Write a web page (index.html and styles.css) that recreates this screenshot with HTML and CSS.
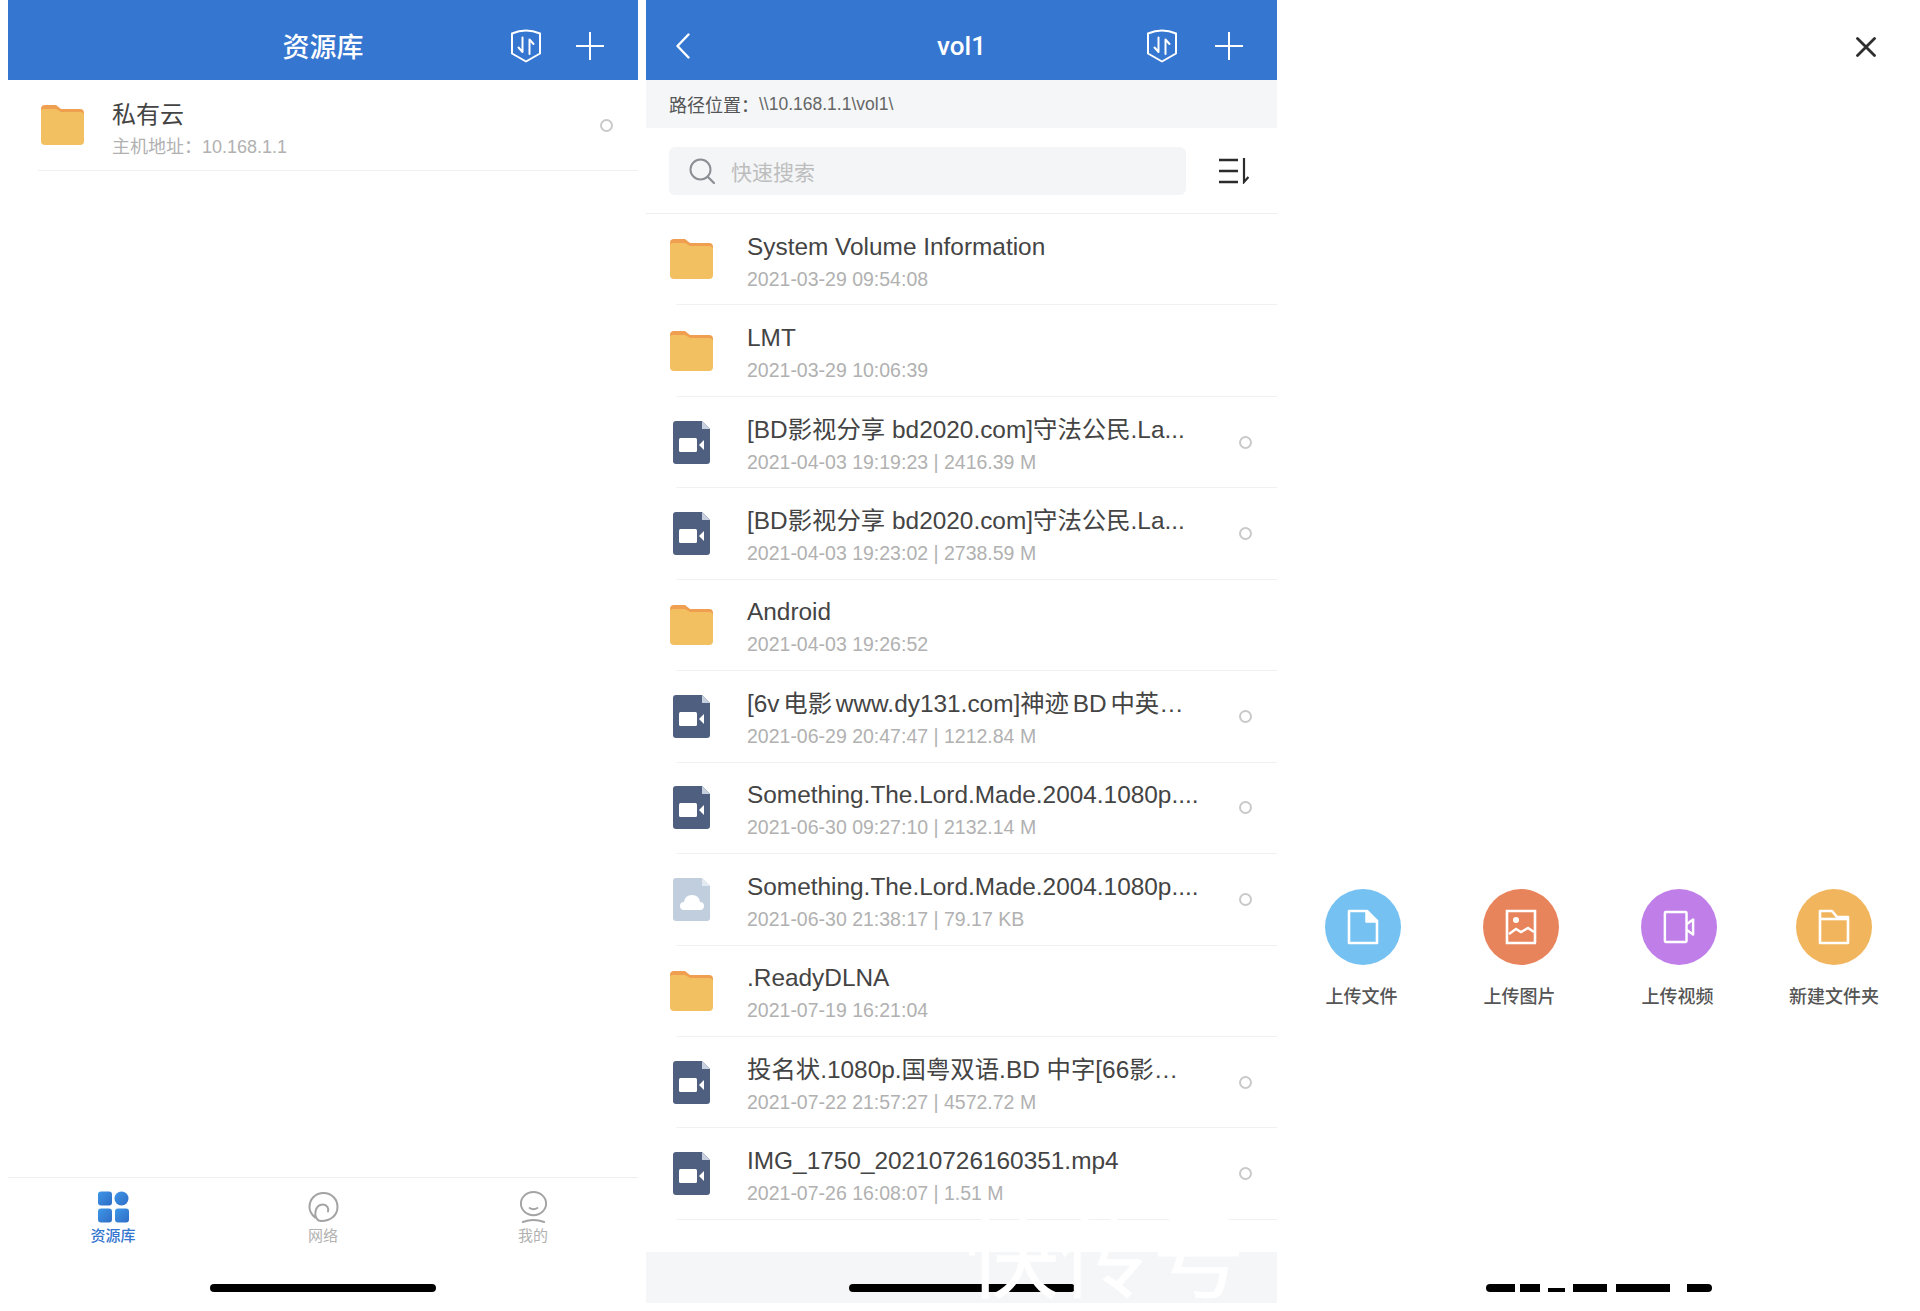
FILE: index.html
```html
<!DOCTYPE html>
<html lang="en">

<head>
  <meta charset="UTF-8">
  <title>资源库</title>
  <link rel="stylesheet" href="styles.css">
</head>

<body>
  <svg class="sprites" width="0" height="0">
    <symbol id="shield" viewBox="0 0 34 34">
      <path d="M3 4.500Q10 1.500 17 1.500T31 4.500V24.500L17 32.500 3 24.500Z" fill="none" stroke="#fff" stroke-width="2" stroke-linejoin="round" />
      <path d="M13.500 8.500V23L9.500 18.500M20.500 25V10.500L24.500 15" fill="none" stroke="#fff" stroke-width="2" stroke-linecap="round" stroke-linejoin="round" />
    </symbol>
    <symbol id="plus" viewBox="0 0 28 28">
      <path d="M14 0V28M0 14H28" stroke="#fff" stroke-width="2" />
    </symbol>
    <symbol id="folder" viewBox="0 0 43 40">
      <path d="M0 4Q0 0 4 0H15L20 4H39Q43 4 43 8V12H0Z" fill="#ef9f4f" />
      <path d="M0 6Q0 4 3 4H15L20 7H39Q43 7 43 11V36Q43 40 39 40H4Q0 40 0 36Z" fill="#f2c061" />
    </symbol>
    <symbol id="video" viewBox="0 0 37 43">
      <path d="M3 0H29L37 8V40Q37 43 34 43H3Q0 43 0 40V3Q0 0 3 0Z" fill="#4f5f80" />
      <path d="M29 0 37 8H29Z" fill="#c7d0de" />
      <rect x="6" y="17" width="18" height="14" rx="1.500" fill="#fff" />
      <path d="M26 24 31 19V29Z" fill="#fff" />
    </symbol>
    <symbol id="cloud" viewBox="0 0 37 43">
      <path d="M3 0H29L37 8V40Q37 43 34 43H3Q0 43 0 40V3Q0 0 3 0Z" fill="#c0cedd" />
      <path d="M29 0 37 8H29Z" fill="#e4eaf1" />
      <path d="M11 32Q7 32 7 28T11 24Q12 17 19 17T27 24Q31 24 31 28T27 32Z" fill="#fff" />
    </symbol>
  </svg>

  <section class="panel panel-home">
    <header class="topbar">
      <h1 class="topbar-title">资源库</h1>
      <svg class="icon-shield"><use href="#shield" /></svg>
      <svg class="icon-plus"><use href="#plus" /></svg>
    </header>
    <div class="row row-host">
      <svg class="row-icon row-folder"><use href="#folder" /></svg>
      <div class="row-text">
        <div class="row-name">私有云</div>
        <div class="row-meta">主机地址：10.168.1.1</div>
      </div>
      <span class="radio"></span>
    </div>
    <nav class="tabs">
      <div class="tab tab-active">
        <svg class="tab-icon" viewBox="0 0 31 31">
          <defs>
            <linearGradient id="tabBlue" x1="0" y1="0" x2="1" y2="1">
              <stop offset="0" stop-color="#3e97e8" />
              <stop offset="1" stop-color="#2f6cc6" />
            </linearGradient>
          </defs>
          <rect x="0" y="0" width="14" height="14" rx="3" fill="url(#tabBlue)" />
          <circle cx="23.500" cy="7" r="7" fill="url(#tabBlue)" />
          <rect x="0" y="17" width="14" height="14" rx="3" fill="url(#tabBlue)" />
          <rect x="17" y="17" width="14" height="14" rx="3" fill="url(#tabBlue)" />
        </svg>
        <span>资源库</span>
      </div>
      <div class="tab">
        <svg class="tab-icon" viewBox="0 0 31 31">
          <path d="M7 26C2.500 22 1.500 18 1.500 15.500 1.500 7.500 7.500 1.500 15.500 1.500S29.500 7.500 29.500 15.500 23 29.500 13 29.500C9 29.500 6.500 24.500 7.500 20 8.500 15 12 13 15 13 19 13 21 17 20 20" fill="none" stroke="#a3a3a3" stroke-width="2" stroke-linecap="round" />
        </svg>
        <span>网络</span>
      </div>
      <div class="tab">
        <svg class="tab-icon" viewBox="0 0 31 33">
          <ellipse cx="15.500" cy="13" rx="13" ry="12" fill="none" stroke="#a3a3a3" stroke-width="2" />
          <path d="M11.500 17.500Q15.500 20 19.500 17.500" fill="none" stroke="#a3a3a3" stroke-width="2" stroke-linecap="round" />
          <path d="M4.500 32Q15.500 28 26.500 32" fill="none" stroke="#a3a3a3" stroke-width="2" stroke-linecap="round" />
        </svg>
        <span>我的</span>
      </div>
    </nav>
    <div class="home-area"><span class="home-bar"></span></div>
  </section>

  <section class="panel panel-files">
    <header class="topbar">
      <svg class="icon-back" viewBox="0 0 14 26">
        <path d="M12.500 1.500 1.500 13 12.500 24.500" fill="none" stroke="#fff" stroke-width="2.400" stroke-linecap="round" stroke-linejoin="round" />
      </svg>
      <h1 class="topbar-title topbar-title-latin">vol1</h1>
      <svg class="icon-shield"><use href="#shield" /></svg>
      <svg class="icon-plus"><use href="#plus" /></svg>
    </header>
    <div class="path-bar">路径位置：<span class="path-value">\\10.168.1.1\vol1\</span></div>
    <div class="search-bar">
      <div class="search-box">
        <svg class="icon-search" viewBox="0 0 26 26">
          <circle cx="11.500" cy="11.500" r="10" fill="none" stroke="#8b8f94" stroke-width="2" />
          <path d="M19 19 25 25" stroke="#8b8f94" stroke-width="2.200" stroke-linecap="round" />
        </svg>
        <span class="search-hint">快速搜索</span>
      </div>
      <svg class="icon-sort" viewBox="0 0 30 26">
        <path d="M0 2H19M0 13H19M0 24H19" stroke="#2b2b2b" stroke-width="2.400" />
        <path d="M25 0V24L29.500 19" fill="none" stroke="#2b2b2b" stroke-width="2.200" />
      </svg>
    </div>
    <ul class="file-list">
      <li class="row">
        <svg class="row-icon row-folder"><use href="#folder" /></svg>
        <div class="row-text">
          <div class="row-name">System Volume Information</div>
          <div class="row-meta">2021-03-29 09:54:08</div>
        </div>
      </li>
      <li class="row">
        <svg class="row-icon row-folder"><use href="#folder" /></svg>
        <div class="row-text">
          <div class="row-name">LMT</div>
          <div class="row-meta">2021-03-29 10:06:39</div>
        </div>
      </li>
      <li class="row">
        <svg class="row-icon row-file"><use href="#video" /></svg>
        <div class="row-text">
          <div class="row-name">[BD影视分享 bd2020.com]守法公民.La...</div>
          <div class="row-meta">2021-04-03 19:19:23 | 2416.39 M</div>
        </div>
        <span class="radio"></span>
      </li>
      <li class="row">
        <svg class="row-icon row-file"><use href="#video" /></svg>
        <div class="row-text">
          <div class="row-name">[BD影视分享 bd2020.com]守法公民.La...</div>
          <div class="row-meta">2021-04-03 19:23:02 | 2738.59 M</div>
        </div>
        <span class="radio"></span>
      </li>
      <li class="row">
        <svg class="row-icon row-folder"><use href="#folder" /></svg>
        <div class="row-text">
          <div class="row-name">Android</div>
          <div class="row-meta">2021-04-03 19:26:52</div>
        </div>
      </li>
      <li class="row">
        <svg class="row-icon row-file"><use href="#video" /></svg>
        <div class="row-text">
          <div class="row-name row-name-tight">[6v 电影 www.dy131.com]神迹 BD 中英…</div>
          <div class="row-meta">2021-06-29 20:47:47 | 1212.84 M</div>
        </div>
        <span class="radio"></span>
      </li>
      <li class="row">
        <svg class="row-icon row-file"><use href="#video" /></svg>
        <div class="row-text">
          <div class="row-name">Something.The.Lord.Made.2004.1080p....</div>
          <div class="row-meta">2021-06-30 09:27:10 | 2132.14 M</div>
        </div>
        <span class="radio"></span>
      </li>
      <li class="row">
        <svg class="row-icon row-file"><use href="#cloud" /></svg>
        <div class="row-text">
          <div class="row-name">Something.The.Lord.Made.2004.1080p....</div>
          <div class="row-meta">2021-06-30 21:38:17 | 79.17 KB</div>
        </div>
        <span class="radio"></span>
      </li>
      <li class="row">
        <svg class="row-icon row-folder"><use href="#folder" /></svg>
        <div class="row-text">
          <div class="row-name">.ReadyDLNA</div>
          <div class="row-meta">2021-07-19 16:21:04</div>
        </div>
      </li>
      <li class="row">
        <svg class="row-icon row-file"><use href="#video" /></svg>
        <div class="row-text">
          <div class="row-name">投名状.1080p.国粤双语.BD 中字[66影…</div>
          <div class="row-meta">2021-07-22 21:57:27 | 4572.72 M</div>
        </div>
        <span class="radio"></span>
      </li>
      <li class="row">
        <svg class="row-icon row-file"><use href="#video" /></svg>
        <div class="row-text">
          <div class="row-name">IMG_1750_20210726160351.mp4</div>
          <div class="row-meta">2021-07-26 16:08:07 | 1.51 M</div>
        </div>
        <span class="radio"></span>
      </li>
    </ul>
    <div class="home-strip"><span class="home-bar"></span></div>
    <div class="watermark">快传号</div>
  </section>

  <section class="panel panel-actions">
    <div class="close-line">
      <svg class="icon-close" viewBox="0 0 20 20">
        <path d="M1.500 1.500 18.500 18.500M18.500 1.500 1.500 18.500" stroke="#2e2e2e" stroke-width="2.800" stroke-linecap="round" />
      </svg>
    </div>
    <div class="actions">
      <div class="action">
        <span class="action-circle action-blue">
          <svg viewBox="0 0 32 36">
            <path d="M2 2H20L30 12V34H2Z" fill="none" stroke="#fff" stroke-width="2.600" stroke-linejoin="round" />
            <path d="M19 2V13H30" fill="#fff" stroke="#fff" stroke-width="1.500" stroke-linejoin="round" />
          </svg>
        </span>
        <span class="action-label">上传文件</span>
      </div>
      <div class="action">
        <span class="action-circle action-orange">
          <svg viewBox="0 0 32 36">
            <path d="M31 34H2V2H30V34" fill="none" stroke="#fff" stroke-width="2.600" />
            <circle cx="11" cy="11" r="3" fill="#fff" />
            <path d="M4 25 11 20 16 23 23 19 29 23" fill="none" stroke="#fff" stroke-width="2.400" />
          </svg>
        </span>
        <span class="action-label">上传图片</span>
      </div>
      <div class="action">
        <span class="action-circle action-purple">
          <svg viewBox="0 0 34 36">
            <rect x="2" y="2" width="23" height="32" rx="1" fill="none" stroke="#fff" stroke-width="2.600" />
            <path d="M25 15 32 10V26L25 21" fill="none" stroke="#fff" stroke-width="2.600" stroke-linejoin="round" />
          </svg>
        </span>
        <span class="action-label">上传视频</span>
      </div>
      <div class="action">
        <span class="action-circle action-yellow">
          <svg viewBox="0 0 32 36">
            <path d="M2 8V2H14L19 8H30V34H2Z" fill="none" stroke="#fff" stroke-width="2.600" stroke-linejoin="round" />
            <path d="M2 10H30" stroke="#fff" stroke-width="2.600" />
          </svg>
        </span>
        <span class="action-label">新建文件夹</span>
      </div>
    </div>
    <span class="home-bar home-bar-cut"></span>
  </section>
</body>

</html>
```

FILE: styles.css
```css
/* Global Styles */
body {
  margin: 0;
  height: 1311px;
  overflow: hidden;
  background: #fff;
  display: flex;
  padding-left: 8px;
  font-family: "Liberation Sans", "Noto Sans CJK SC", sans-serif;
  color: #444;
}

.sprites {
  position: absolute;
}

.panel {
  position: relative;
  flex-shrink: 0;
  display: flex;
  flex-direction: column;
  height: 100%;
}

.panel-home {
  width: 630px;
  margin-right: 8px;
}

.panel-files {
  width: 631px;
}

.panel-actions {
  width: 643px;
}

/* Header */
.topbar {
  position: relative;
  height: 80px;
  flex-shrink: 0;
  box-sizing: border-box;
  padding-top: 11px;
  background: #3576d0;
  display: flex;
  align-items: center;
  justify-content: center;
}

.topbar-title {
  margin: 0;
  font-size: 27px;
  font-weight: 500;
  color: #fff;
}

.topbar-title-latin {
  font-family: Roboto, sans-serif;
  font-size: 26px;
}

.icon-shield {
  position: absolute;
  top: 29px;
  right: 95px;
  width: 34px;
  height: 34px;
}

.panel-files .icon-shield {
  right: 98px;
}

.icon-plus {
  position: absolute;
  top: 32px;
  right: 34px;
  width: 28px;
  height: 28px;
}

.icon-back {
  position: absolute;
  top: 33px;
  left: 30px;
  width: 14px;
  height: 26px;
}

/* Rows */
.row {
  height: 91.45px;
  box-sizing: border-box;
  display: flex;
  align-items: center;
  position: relative;
  padding-bottom: 1px;
}

.row::after {
  content: "";
  position: absolute;
  left: 30px;
  right: 0;
  bottom: 0;
  height: 1px;
  background: #f0f1f2;
}

.row-icon {
  flex-shrink: 0;
  display: block;
}

.row-folder {
  width: 43px;
  height: 40px;
  margin-left: 24px;
}

.row-file {
  width: 37px;
  height: 43px;
  margin-left: 27px;
  margin-right: 3px;
}

.row-text {
  flex: 1;
  margin-left: 34px;
  padding-top: 3px;
  min-width: 0;
}

.row-name {
  font-size: 24.400px;
  line-height: 32px;
  color: #444;
  white-space: nowrap;
}

.row-name-tight {
  word-spacing: -3px;
}

.row-meta {
  margin-top: 4px;
  font-size: 19.500px;
  line-height: 24px;
  color: #b1b1b1;
  white-space: nowrap;
}

.radio {
  width: 13px;
  height: 13px;
  box-sizing: border-box;
  flex-shrink: 0;
  margin-right: 25px;
  border: 2px solid #c9c9c9;
  border-radius: 50%;
}

.row-host .row-folder {
  margin-left: 33px;
}

.row-host .row-text {
  margin-left: 28px;
  padding-top: 7px;
}

.row-host .row-name {
  font-size: 24px;
}

.row-host .row-meta {
  font-size: 18px;
}

/* Bottom tabs */
.tabs {
  margin-top: auto;
  height: 70px;
  border-top: 1px solid #eceeef;
  display: grid;
  grid-template-columns: 210px 210px 210px;
  padding-top: 13px;
  box-sizing: border-box;
}

.tab {
  display: flex;
  flex-direction: column;
  align-items: center;
  font-size: 15px;
  line-height: 20px;
  color: #b1b1b1;
}

.tab-active {
  color: #3576d0;
  font-weight: 500;
}

.tab-icon {
  width: 31px;
  height: 32px;
  margin-bottom: 3px;
}

.home-area {
  height: 64px;
  display: flex;
  justify-content: center;
  padding-top: 37px;
  box-sizing: border-box;
}

.home-bar {
  display: block;
  width: 226px;
  height: 8px;
  border-radius: 4px;
  background: #000;
}

/* File browser */
.path-bar {
  height: 48px;
  flex-shrink: 0;
  box-sizing: border-box;
  padding-left: 23px;
  background: #f4f6f8;
  display: flex;
  align-items: center;
  font-size: 18px;
  color: #555;
}

.path-value {
  font-size: 17.500px;
  color: #666;
}

.search-bar {
  height: 86px;
  flex-shrink: 0;
  box-sizing: border-box;
  display: flex;
  align-items: center;
  padding-left: 23px;
  border-bottom: 1px solid #eceeef;
}

.search-box {
  width: 517px;
  height: 48px;
  display: flex;
  align-items: center;
  border-radius: 6px;
  background: #f3f5f7;
}

.icon-search {
  width: 26px;
  height: 26px;
  margin-left: 20px;
}

.search-hint {
  margin-left: 16px;
  font-size: 21px;
  color: #bdbdbd;
}

.icon-sort {
  width: 30px;
  height: 26px;
  margin-left: 33px;
}

.file-list {
  list-style: none;
  margin: 0;
  padding: 0;
}

.home-strip {
  position: absolute;
  left: 0;
  right: 0;
  top: 1252px;
  height: 51px;
  background: #f4f6f8;
  display: flex;
  justify-content: center;
  padding-top: 32px;
  box-sizing: border-box;
}

/* Actions */
.close-line {
  height: 889px;
  flex-shrink: 0;
  box-sizing: border-box;
  padding: 37px 44px 0 0;
  display: flex;
  justify-content: flex-end;
}

.icon-close {
  width: 20px;
  height: 20px;
}

.actions {
  display: flex;
  padding-left: 7px;
}

.action {
  width: 158px;
  display: flex;
  flex-direction: column;
  align-items: center;
  flex-shrink: 0;
}

.action:last-child {
  width: 152px;
}

.action-circle {
  width: 76px;
  height: 76px;
  border-radius: 50%;
  display: flex;
  align-items: center;
  justify-content: center;
}

.action-circle svg {
  width: 32px;
  height: 36px;
}

.action-blue {
  background: #74c1f2;
}

.action-orange {
  background: #e8845c;
}

.action-purple {
  background: #c07fe8;
}

.action-yellow {
  background: #f1b55d;
}

.action-label {
  margin-top: 19px;
  margin-right: 3px;
  font-size: 18px;
  font-weight: 500;
  line-height: 26px;
  color: #555;
  white-space: nowrap;
}

.action:last-child .action-label {
  margin-right: 0;
}

/* Home bar of the last panel, broken up by the white watermark */
.home-bar-cut {
  position: absolute;
  top: 1284px;
  left: 209px;
  border-radius: 4px;
  background:
    linear-gradient(90deg, transparent 62px, #000 62px, #000 79px, transparent 79px) 0 4px / 100% 4px no-repeat,
    linear-gradient(90deg, #000 29px, transparent 29px, transparent 34px, #000 34px, #000 54px, transparent 54px, transparent 87px, #000 87px, #000 121px, transparent 121px, transparent 130px, #000 130px, #000 184px, transparent 184px, transparent 201px, #000 201px);
}

/* Watermark over the bottom of the picture */
.watermark {
  position: absolute;
  left: 320px;
  top: 1208px;
  font-size: 93px;
  line-height: 103px;
  color: #fff;
  white-space: nowrap;
}
```
